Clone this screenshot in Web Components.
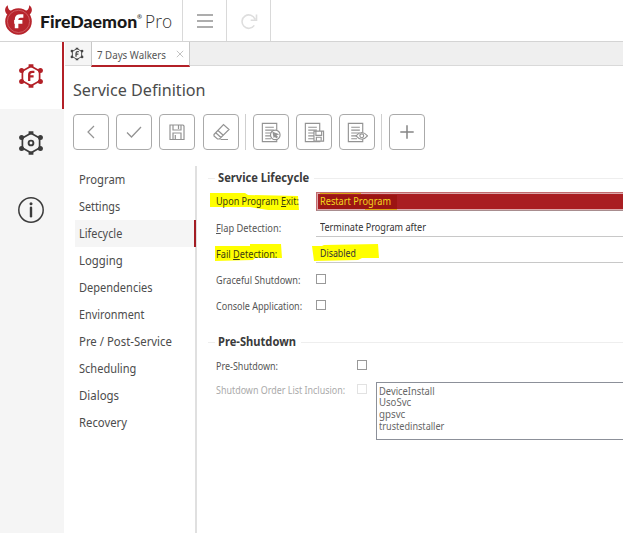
<!DOCTYPE html>
<html lang="en"><head><meta charset="utf-8"><title>FireDaemon Pro</title>
<style>
html,body{margin:0;background:#fff;height:533px;overflow:hidden}
body{font-family:"Noto Sans","Open Sans",sans-serif;color:#4a4a4a}
u{text-decoration-thickness:1px;text-underline-offset:1px}
</style></head><body>
<fd-app></fd-app>
<script>
const define=(name,html,init)=>customElements.define(name,class extends HTMLElement{
  connectedCallback(){
    if(this.shadowRoot)return;
    const t=document.createElement('template');
    t.innerHTML=html;
    this.attachShadow({mode:'open'}).append(t.content.cloneNode(true));
    if(init)init(this,this.shadowRoot);
  }
});

/* Text condensed or widened to a fixed line width. */
define('fit-text',`<style>:host{display:inline-block;white-space:nowrap;line-height:1}span{display:inline-block;white-space:nowrap;transform-origin:0 50%}</style><span><slot></slot></span>`,(el,root)=>{
  const s=root.querySelector('span'),w=+el.getAttribute('w');
  s.style.transform='scaleX('+w/s.offsetWidth+')';
  el.style.width=w+'px';
});

const hex=(inner,c)=>`<g fill="none" stroke="${c}" stroke-width="1.7"><path d="M13 3.2 21.6 8V18L13 22.8 4.4 18V8Z"/></g><g fill="${c}"><path d="M10.6 1.2h4.8v3.2h-4.8zM10.6 21.6h4.8v3.2h-4.8z"/><circle cx="3.6" cy="7.6" r="2.5"/><circle cx="22.4" cy="7.6" r="2.5"/><circle cx="3.6" cy="18.4" r="2.5"/><circle cx="22.4" cy="18.4" r="2.5"/></g>${inner}`;
const F=c=>`<path d="M11.2 18v-6.2q0-3 3-3h2.2M11.2 13.4h4.4" fill="none" stroke="${c}" stroke-width="2.3"/>`;
const doc='<path d="M3.5 2.5h15v19h-15zM6.500 6.500h9M6.500 9.500h9M6.500 12.500h9M6.500 15.500h7M6.500 18.500h6"/>';
const icons={
  service:[26,26,hex(F('#b32027'),'#b32027')],
  servicesmall:[26,26,hex(F('#444'),'#444')],
  gear:[26,26,hex('<circle cx="13" cy="13" r="2.4" fill="none" stroke="#3c3c3c" stroke-width="1.9"/>','#3c3c3c')],
  info:[26,26,'<circle cx="13" cy="13" r="12.2" fill="none" stroke="#3c3c3c" stroke-width="1.5"/><circle cx="13" cy="6.7" r="1.5" fill="#3c3c3c"/><path d="M13 10.8v8.5" stroke="#3c3c3c" stroke-width="2.4" stroke-linecap="round"/>'],
  logo:[32,35,'<path d="M5 2.2C1 4.5 1 11 6.5 12.8L11 8.2C7.5 8.5 4.8 6.5 5 2.2ZM27 2.2C31 4.500 31 11 25.500 12.800L21 8.200C24.500 8.500 27.200 6.500 27 2.200Z" fill="#b7242c"/><circle cx="16" cy="19" r="13.700" fill="#b7242c"/><circle cx="16" cy="19" r="11.500" fill="none" stroke="#d36a6f" stroke-width=".8"/><path d="M14 26V17q0-3.500 4-3.500H21M11.500 19.500h8.500" fill="none" stroke="#fff" stroke-width="3.700"/>'],
  menu:[18,16,'<path d="M1 2h16M1 8h16M1 14h16" stroke="#929292" stroke-width="1.500"/>'],
  redo:[18,18,'<path d="M14.300 13.400A6.700 6.700 0 1 1 15 7.200M16.500 2.500V8.300H10.700" fill="none" stroke="#dedede" stroke-width="1.600"/>'],
  close:[8,8,'<path d="M.8.8 7.200 7.200M7.200.8.8 7.200" stroke="#c3c3c3" stroke-width="1"/>'],
  back:[24,24,'<path d="M15 6 9 12l6 6"/>'],
  check:[24,24,'<path d="m5 12.500 4.500 4.500L19 7" stroke-width="1.300"/>'],
  save:[24,24,'<path d="M5 5h13l1 1v13.500H5zM8 5v5h8V5M13.500 5v4M8 19v-6h8v6M10.300 15v4"/>'],
  erase:[24,24,'<path d="m5 14.500 9.500-10 5.500 5L10.500 19H8.500L5 16ZM9 10.500l5.500 5M7 13l5 4.500M11.500 19.500H19"/>'],
  doccursor:[24,24,doc+'<circle cx="17" cy="14.500" r="5" fill="#fff"/><path fill="#999" d="m14.700 12 4.800 1.800-2 .8 1.500 2-1 .8-1.300-2-1 1.300Z"/>'],
  docsave:[24,24,doc+'<path fill="#fff" d="M12.500 10.500h10v10.500h-10z"/><path d="M14.500 10.500v4.500h6v-4.500M15 20.500v-3.500h5V20.500"/>'],
  doceye:[24,24,doc+'<path fill="#fff" d="M11.500 15.500q6-7 12 0q-6 7-12 0Z"/><circle cx="17.500" cy="15.500" r="2"/>'],
  plus:[24,24,'<path d="M12 5.300v13.400M5.300 12h13.400" stroke="#858585" stroke-width="1.500"/>']
};
define('fd-icon',`<style>:host{display:block;flex:none}svg{display:block}</style><div></div>`,(el,root)=>{
  const [w,h,s]=icons[el.getAttribute('name')],z=+(el.getAttribute('size')||w);
  el.style.width=z+'px';el.style.height=z*h/w+'px';
  root.querySelector('div').innerHTML=`<svg viewBox="0 0 ${w} ${h}" style="width:${z}px;height:${z*h/w}px" fill="none" stroke-width="1.2" stroke="${el.hasAttribute('line')?'#939393':'none'}">${s}</svg>`;
});

define('fd-header',`<style>
:host{display:flex;height:41px;border-bottom:1px solid #d4d4d4;background:#fff;box-sizing:content-box}
.brand{width:182px;display:flex;align-items:flex-start;box-sizing:border-box;padding:3px 0 0 3px}
.name{font:900 17.5px/1 Lato,sans-serif;color:#191919;margin:10px 0 0 6px}
.r{font-size:6px;font-weight:700;color:#333;margin:11px 0 0 0;width:5px;line-height:1}
.pro{font:300 18px/1 "Open Sans","Noto Sans",sans-serif;color:#333;margin:9px 0 0 3px}
.b{box-sizing:border-box;width:44px;border-left:1px solid #d9d9d9;display:grid;place-items:center}
.b:last-child{width:45px;border-right:1px solid #d9d9d9}
</style><div class="brand"><fd-icon name="logo" size="31"></fd-icon><fit-text class="name" w="97">FireDaemon</fit-text><span class="r">®</span><fit-text class="pro" w="27">Pro</fit-text></div>
<div class="b"><fd-icon name="menu"></fd-icon></div><div class="b"><fd-icon name="redo"></fd-icon></div>`);

define('fd-rail',`<style>
:host{display:block;width:64px;background:#f5f5f5}
div{height:67px;display:grid;place-items:center;box-sizing:border-box;padding-right:2px}
.on{background:#fff;border-right:2px solid #b32027;padding-right:0}
</style><div class="on"><fd-icon name="service"></fd-icon></div><div><fd-icon name="gear"></fd-icon></div><div><fd-icon name="info"></fd-icon></div>`);

define('fd-tabs',`<style>
:host{display:flex;height:24px;background:#efefef;border-bottom:1px solid #d9d9d9;box-sizing:border-box}
.home{width:26px;display:grid;place-items:center;background:#f5f5f5;padding-right:3px;box-sizing:border-box}
.tab{width:99px;height:25px;box-sizing:border-box;border:1px solid #c8c8c8;border-top:0;border-bottom:2px solid #b32027;background:#fff;display:flex;align-items:center;padding:1px 5px 0;justify-content:space-between;font-size:11px;color:#555}
</style><div class="home"><fd-icon name="servicesmall" size="14"></fd-icon></div><div class="tab"><fit-text w="69">7 Days Walkers</fit-text><fd-icon name="close"></fd-icon></div>`);

define('fd-button',`<style>:host{display:grid;place-items:center;box-sizing:border-box;width:36px;height:36px;border:1px solid #aaa;border-radius:4px;background:#fff}</style><slot></slot>`);
define('fd-toolbar',`<style>
:host{display:flex;gap:7.200px;align-items:center;height:36px}
i{width:1px;height:36px;background:#cfcfcf;margin:0 -.7px}
</style>${['back','check','save','erase','|','doccursor','docsave','doceye','|','plus'].map(n=>n==='|'?'<i></i>':`<fd-button><fd-icon line name="${n}" size="${n.startsWith('doc')?23:24}"></fd-icon></fd-button>`).join('')}`);

define('fd-nav',`<style>
:host{display:block;width:122px;border-right:2px solid #e0e0e0;box-sizing:border-box}
div{height:27px;display:flex;align-items:center;padding-left:4px;font-size:12px;color:#4c4c4c;box-sizing:border-box}
.on{background:#f5f5f5;border-right:2px solid #a31d24;margin-right:-1px}
</style>${[['Program',46],['Settings',41.500],['Lifecycle',43.500],['Logging',43.500],['Dependencies',73.500],['Environment',65],['Pre / Post-Service',93],['Scheduling',57],['Dialogs',40],['Recovery',48]].map(([t,w])=>`<div class="${t==='Lifecycle'?'on':''}"><fit-text w="${w}">${t}</fit-text></div>`).join('')}`);

define('fd-heading',`<style>
:host{display:flex;align-items:center;height:18px;font-size:12px;font-weight:700;color:#3b3b3b}
:host::before{content:"";width:7px;height:1px;background:#eee;margin-right:3px}
:host::after{content:"";flex:1;height:1px;background:#eee;margin-left:5px}
</style><slot></slot>`);

define('fd-row',`<style>
:host{display:grid;grid-template-columns:var(--label,108px) 1fr;height:26px;align-items:center;position:relative;font-size:11px;color:#555}
.l{padding-left:8px;position:relative;z-index:1}
.v{position:relative}
</style><div class="l"><slot name="label"></slot></div><div class="v"><slot></slot></div>`);

define('fd-check',`<style>:host{display:block;width:10px;height:10px;box-sizing:border-box;border:1px solid #999;background:#fff}:host([off]){border-color:#e2e2e2}</style>`);

define('fd-select',`<style>
:host{display:flex;align-items:center;height:19px;box-sizing:border-box;border-bottom:1px solid #c8c8c8;padding:0 0 0 4px;color:#333;position:relative}
:host([active]){background:#a91e22;color:#f3d51c;border:1px solid #c26b6e;border-right:0;border-bottom-color:#a88d8f;box-shadow:inset 0 1px #dca9ab,inset 1px 0 #dca9ab,inset 0 -1px #dca9ab;padding:0 0 1px 3px}
::slotted(fit-text){position:relative;z-index:1}
</style><slot></slot>`);

/* Marker strokes lie beneath the text of the row they belong to. */
define('fd-marker',`<style>:host{position:absolute;display:block;width:0;height:0;z-index:0}svg{position:absolute;left:0;top:0;overflow:visible}</style><svg width="1" height="1"></svg>`,(el,root)=>{
  root.querySelector('svg').innerHTML=`<path d="${el.getAttribute('d')}" fill="${el.getAttribute('color')||'#ffff00'}"/>`;
});

define('fd-list',`<style>
:host{display:block;height:58px;box-sizing:border-box;border:1px solid #8c9099;border-right:0;background:#fff;padding:2px 0 0 2px;font-size:10.500px;color:#666}
div{height:11.700px;display:flex;align-items:center}
</style><div><fit-text w="56">DeviceInstall</fit-text></div><div><fit-text w="32">UsoSvc</fit-text></div><div><fit-text w="26">gpsvc</fit-text></div><div><fit-text w="65">trustedinstaller</fit-text></div>`);

define('fd-form',`<style>
:host{display:block;flex:1;padding:3px 0 0 11px;min-width:0}
.mid{margin-top:15px}
.pre{--label:149px;margin-top:2px;height:24px}
.inc{display:grid;grid-template-columns:149px 19px 1fr;align-items:start;font-size:11px;color:#aaa;margin-top:5px}
.inc fit-text{margin:2px 0 0 8px}
.inc fd-check{margin-top:2px}
.dark{color:#3b3b10;position:relative}
</style>
<fd-heading><fit-text w="91">Service Lifecycle</fit-text></fd-heading>
<fd-row>
 <fd-marker slot="label" style="left:2px;top:0" d="M0 0L35 0 38 2 88 3 89 17 58 17 40 14 0 14Z"></fd-marker>
 <fit-text class="dark" slot="label" w="83">Upon Program <u>E</u>xit:</fit-text>
 <fd-select active style="top:1px"><fd-marker style="left:3px;top:1px" color="#9c1513" d="M0 1H77V15H0Z"></fd-marker><fd-marker style="left:3px;top:0" color="#d9a514" d="M0 0H41V1H0ZM45 16H77V17H45Z"></fd-marker><fit-text w="71">Restart Program</fit-text></fd-select>
</fd-row>
<fd-row style="margin-top:1px"><fit-text slot="label" w="65"><u>F</u>lap Detection:</fit-text><fd-select><fit-text w="106">Terminate Program after</fit-text></fd-select></fd-row>
<fd-row><fd-marker slot="label" style="left:7px;top:0" d="M0 0L35 0 35-2 66-2 67 12 40 12 38 14 0 15Z"></fd-marker><fit-text class="dark" slot="label" w="61">Fail <u>D</u>etection:</fit-text>
 <fd-select><fd-marker style="left:-4px;top:1px" d="M0 1L10 1 12 0 66-1 67 13 50 13 46 15 2 16Z"></fd-marker><fit-text w="36">Disabled</fit-text></fd-select></fd-row>
<fd-row><fit-text slot="label" w="84">Graceful Shutdown:</fit-text><fd-check></fd-check></fd-row>
<fd-row><fit-text slot="label" w="86">Console Application:</fit-text><fd-check></fd-check></fd-row>
<fd-heading class="mid"><fit-text w="78">Pre-Shutdown</fit-text></fd-heading>
<fd-row class="pre"><fit-text slot="label" w="62">Pre-Shutdown:</fit-text><fd-check></fd-check></fd-row>
<div class="inc"><fit-text w="129">Shutdown Order List Inclusion:</fit-text><fd-check off></fd-check><fd-list></fd-list></div>`);

define('fd-app',`<style>
:host{display:flex;flex-direction:column;width:623px;height:533px;background:#fff}
.body{display:flex;flex:1;min-height:0}
main{flex:1;min-width:0;display:flex;flex-direction:column;padding-left:1px}
h1{font-size:17px;font-weight:400;margin:15px 0 0 8px;height:18px;line-height:1;color:#4b4b4b}
fd-toolbar{margin:15px 0 0 8px}
.split{display:flex;flex:1;margin:16px 0 0 10px;min-height:0}
</style><fd-header></fd-header><div class="body"><fd-rail></fd-rail><main><fd-tabs></fd-tabs><h1><fit-text w="133">Service Definition</fit-text></h1><fd-toolbar></fd-toolbar><div class="split"><fd-nav></fd-nav><fd-form></fd-form></div></main></div>`);
</script></body></html>
